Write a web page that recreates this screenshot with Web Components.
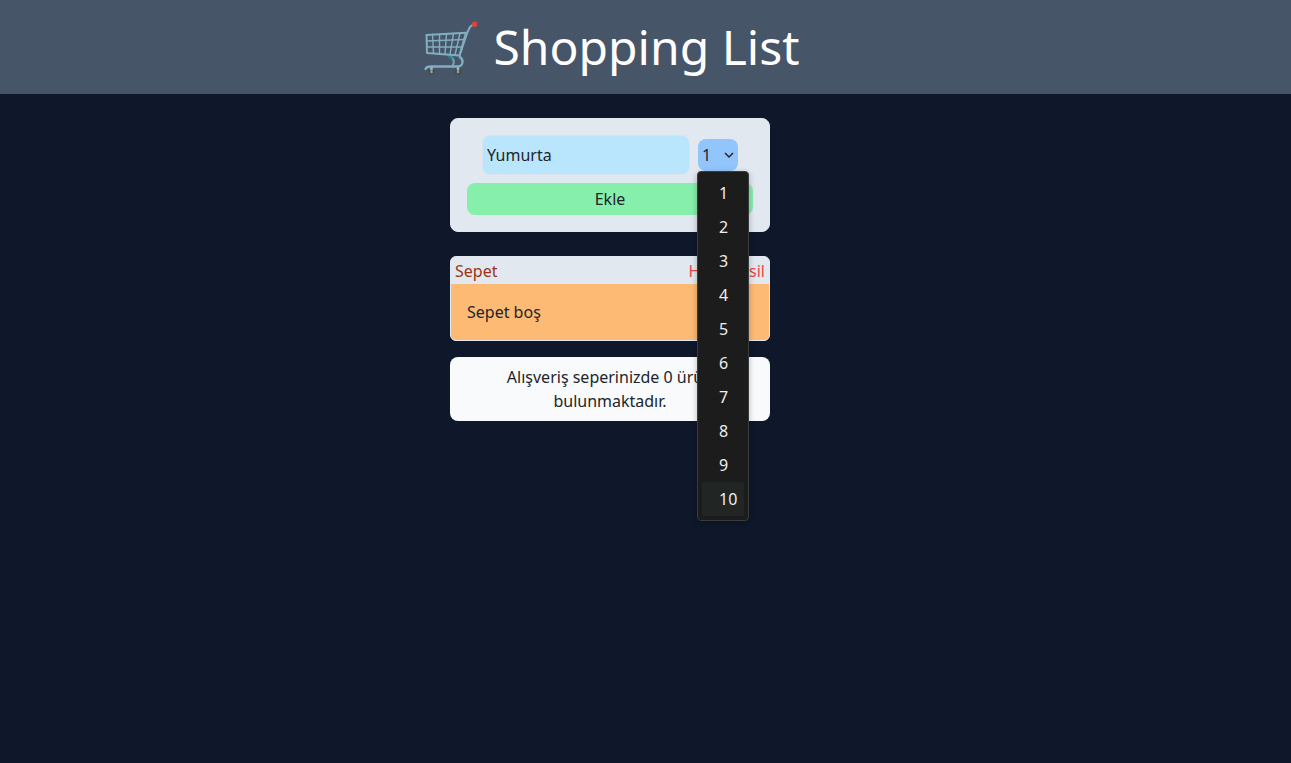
<!DOCTYPE html>
<html lang="tr">
<head>
<meta charset="utf-8">
<meta name="viewport" content="width=device-width, initial-scale=1">
<title>Shopping List</title>
<style>
body { margin: 0; min-height: 100vh; background: #0f172a; color: #212529; font: 16px/24px "Noto Sans", sans-serif; }
</style>
</head>
<body>
<shopping-app></shopping-app>
<script>
class Base extends HTMLElement {
  constructor() {
    super();
    this.attachShadow({ mode: "open" }).innerHTML = "<style>*{box-sizing:border-box}:host{display:block;box-sizing:border-box}</style>" + this.view();
  }
}

customElements.define("cart-icon", class extends Base {
  view() {
    return `<style>svg{display:block;width:54px;height:56px}</style>
<svg viewBox="-1 -1 54 56" fill="none" aria-hidden="true" stroke-linecap="round" stroke-linejoin="round">
<g fill="#4d4848"><circle cx="7.500" cy="51.500" r="3.200"/><circle cx="34" cy="51.500" r="3.200"/></g>
<g fill="#a8998a"><circle cx="7.500" cy="52" r="1.300"/><circle cx="34" cy="52" r="1.300"/></g>
<path d="M7.500 47v2.500M34 47v2.500" stroke="#80c0d1" stroke-width="2.600"/>
<path d="M25 36c5 2 6 6 3.500 10" stroke="#6fa3b4" stroke-width="2.200"/>
<path d="M24.500 36l3 2.500M34 36l3 2.500" stroke="#2f7e8c" stroke-width="2.400"/>
<g stroke="#82aebf" stroke-width="1.400">
<path d="M8.500 14.500L9.500 33M15.500 14.200L15.500 33.500M22.500 13.800L21 34M29.500 13.400L26 34.500M36 13L31 35"/>
<path d="M2.500 21l38-1.500M3 27l35.500 0"/></g>
<g stroke="#82aebf" stroke-width="2">
<path d="M2.500 15L42 12.700 35.500 35.500 3 33Z"/>
<path d="M35.500 35.500L43.500 12 46 7q1.500-2.200 4.500-2.300"/>
<path d="M36 37c4 3 3.500 9.500-3 9.500H7q-4.500 0-5.500 2.500" stroke-width="2.300"/></g>
<circle cx="50.700" cy="4.300" r="2.700" fill="#e5423d"/>
</svg>`;
  }
});

customElements.define("app-header", class extends Base {
  view() {
    return `<style>
:host{background:#475569;padding:16px 68px 16px 0}
h1{margin:0;display:flex;justify-content:center;align-items:center;gap:16px;font-size:48px;line-height:62px;font-weight:400;color:#fff}
</style><h1><cart-icon></cart-icon><slot></slot></h1>`;
  }
});

customElements.define("quantity-picker", class extends Base {
  view() {
    const n = Array.from({ length: 10 }, (_, i) => i + 1);
    return `<style>
:host{position:relative;width:40px;height:32px}
select{appearance:none;display:block;width:100%;height:100%;margin:0;padding:0 4px;border:0;border-radius:8px;background:#93c5fd;color:inherit;font:inherit}
svg{position:absolute;right:4px;top:12px;width:10px;height:8px;pointer-events:none}
ul{position:absolute;z-index:2;top:100%;left:-1px;width:52px;margin:0;padding:4px;list-style:none;background:#1c1c1c;border:1px solid #383c3a;border-radius:4px;color:#eee;box-shadow:0 2px 6px #0004}
li{padding-left:17px;line-height:34px;border-radius:2px}
li.active{background:#212524}
</style>
<select aria-label="Adet">${n.map(i => `<option>${i}</option>`).join("")}</select>
<svg viewBox="0 0 10 8" fill="none" stroke="#212529" stroke-width="1.500" aria-hidden="true"><path d="M1 2l4 4 4-4"/></svg>
<ul role="listbox" aria-label="Adet">${n.map(i => `<li role="option"${i === 10 ? ' class="active"' : ""}>${i}</li>`).join("")}</ul>`;
  }
});

customElements.define("item-form", class extends Base {
  view() {
    return `<style>
:host{background:#e2e8f0;border:1px solid #e2e8f0;border-radius:8px;padding:16px}
form{margin:0;display:grid;gap:8px}
.row{display:flex;justify-content:center;align-items:center;gap:8px}
input{width:208px;height:40px;padding:0 4px;border:1px solid #dbe4ee;border-radius:8px;background:#bae6fd;color:inherit;font:inherit;outline:0}
button{height:32px;padding:0;border:0;border-radius:8px;background:#86efac;color:inherit;font:inherit}
</style>
<form><div class="row"><input type="text" aria-label="Ürün" value="Yumurta"><quantity-picker></quantity-picker></div>
<button type="button">Ekle</button></form>`;
  }
});

customElements.define("basket-card", class extends Base {
  view() {
    return `<style>
:host{border:1px solid #e2e8f0;border-radius:6px;background:#e2e8f0;overflow:hidden}
header{display:flex;justify-content:space-between;align-items:center;padding:2px 4px 1px}
h2{margin:0;font:inherit;color:#9a3412}
button{padding:0;border:0;background:none;font:inherit;color:#ef4444}
.body{padding:16px;background:#fdba74}
</style>
<header><h2>Sepet</h2><button type="button">Hepsini sil</button></header><div class="body"><slot></slot></div>`;
  }
});

customElements.define("basket-summary", class extends Base {
  view() {
    return `<style>:host{background:#f8fafc;border-radius:8px;padding:8px 16px;text-align:center}</style><slot></slot>`;
  }
});

customElements.define("shopping-app", class extends Base {
  view() {
    return `<style>
main{display:flex;flex-direction:column;align-items:center;padding:24px 71px 24px 0}
main>*{width:100%;max-width:320px}
item-form{margin-bottom:24px}
basket-card{margin-bottom:16px}
</style>
<app-header>Shopping List</app-header>
<main><item-form></item-form><basket-card>Sepet boş</basket-card>
<basket-summary>Alışveriş seperinizde 0 ürün bulunmaktadır.</basket-summary></main>`;
  }
});
</script>
</body>
</html>
